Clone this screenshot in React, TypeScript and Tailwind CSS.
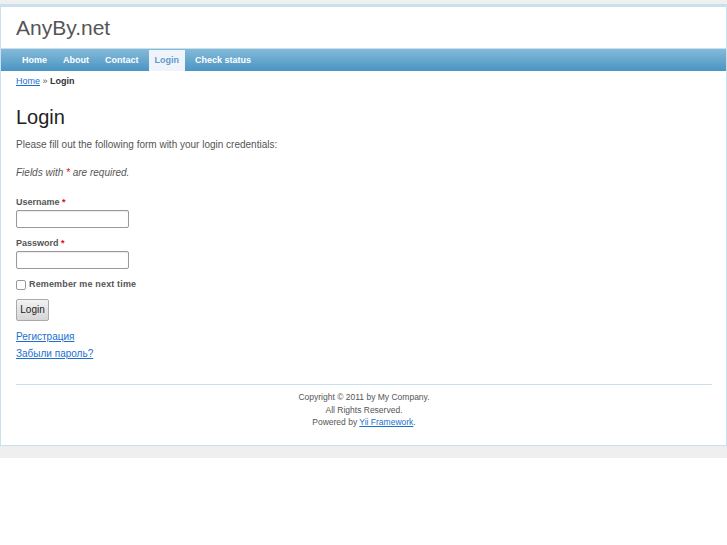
import React from "react";

const font = { fontFamily: '"Liberation Sans", Arial, sans-serif' };

export default function App() {
  const menu = ["Home", "About", "Contact", "Login", "Check status"];
  return (
    <div className="min-h-[545px] bg-white text-[#555]" style={font}>
      <div className="bg-[#efefef] pt-[4px] pb-[12px]">
        <div className="bg-white border border-[#C9E0ED]">
          <div className="border-t-[2px] border-[#C9E0ED]">
            <div className="h-[41px] pl-[15px] text-[21px] leading-[41px] text-[#555]">AnyBy.net</div>
            <div className="h-[23px] border-t border-[#C9E0ED] bg-gradient-to-b from-[#84bad9] to-[#4995c3] flex items-end pl-[15px] gap-[4px]">
              {menu.map((m) => (
                <div
                  key={m}
                  className={
                    "h-[21px] px-[6px] text-[9px] font-bold leading-[21px] " +
                    (m === "Login" ? "bg-[#EFF4FA] text-[#6399cd]" : "text-white")
                  }
                >
                  {m}
                </div>
              ))}
            </div>
          </div>
          <div className="h-[20px] leading-[20px] pl-[15px] text-[9px]">
            <a className="text-[#1a6fd0] underline">Home</a>
            <span> » </span>
            <span className="font-bold text-[#333]">Login</span>
          </div>
          <div className="px-[15px]">
            <h1 className="mt-[13px] h-[26px] text-[20px] leading-[26px] text-[#222]">Login</h1>
            <p className="mt-[7px] h-[14px] pt-[1px] text-[10px] leading-[14px]">
              Please fill out the following form with your login credentials:
            </p>
            <p className="mt-[14px] h-[14px] pt-[1px] text-[10px] leading-[14px] italic">
              Fields with <span className="text-red-600">*</span> are required.
            </p>
            <div className="mt-[15px] h-[14px] pt-[1px] text-[9px] leading-[14px] font-bold">
              Username <span className="text-red-600">*</span>
            </div>
            <div className="mt-[2px] w-[113px] h-[18px] border border-[#999] rounded-[2px] bg-white shadow-[inset_0_1px_1px_rgba(0,0,0,0.08)]" />
            <div className="mt-[7px] h-[14px] pt-[1px] text-[9px] leading-[14px] font-bold">
              Password <span className="text-red-600">*</span>
            </div>
            <div className="mt-[2px] w-[113px] h-[18px] border border-[#999] rounded-[2px] bg-white shadow-[inset_0_1px_1px_rgba(0,0,0,0.08)]" />
            <div className="mt-[8px] h-[14px] pt-[1px] flex items-center gap-[3px] text-[9px] font-bold tracking-[0.15px]">
              <div className="w-[10px] h-[10px] border border-[#999] rounded-[2px] bg-white" />
              <span>Remember me next time</span>
            </div>
            <div className="mt-[8px] w-[33px] h-[22px] border border-[#aaa] rounded-[2px] bg-gradient-to-b from-[#f2f2f2] to-[#d6d6d6] text-[10px] leading-[20px] text-center text-[#222]">
              Login
            </div>
            <div className="mt-[8px] h-[14px] pt-[1px] text-[10px] leading-[14px]">
              <a className="text-[#1a6fd0] underline">Регистрация</a>
            </div>
            <div className="mt-[3px] h-[14px] pt-[1px] text-[10px] leading-[14px]">
              <a className="text-[#1a6fd0] underline">Забыли пароль?</a>
            </div>
          </div>
          <div className="mt-[24px] ml-[15px] mr-[14px] border-t border-[#C9E0ED] pt-[6px] pb-[16px] text-center text-[8.5px] leading-[12.5px]">
            <div>Copyright © 2011 by My Company.</div>
            <div>All Rights Reserved.</div>
            <div>
              Powered by <a className="text-[#1a6fd0] underline">Yii Framework</a>.
            </div>
          </div>
        </div>
      </div>
    </div>
  );
}
